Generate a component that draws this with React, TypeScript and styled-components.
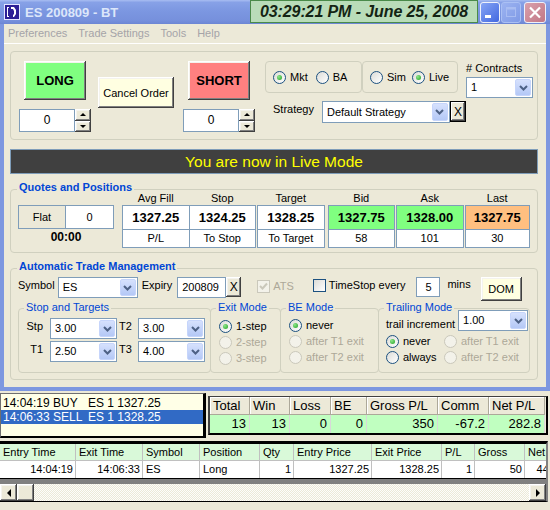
import styled, { createGlobalStyle } from 'styled-components';

const GlobalStyle = createGlobalStyle`
  * { box-sizing: border-box; }
  html, body { margin: 0; padding: 0; }
  body {
    width: 550px;
    height: 510px;
    overflow: hidden;
    background: #ece9d8;
    color: #000;
    font-family: 'Liberation Sans', Arial, Helvetica, sans-serif;
    font-size: 11px;
    line-height: 13px;
  }
  button { font-family: inherit; color: #000; padding: 0; margin: 0; }
`;

const raised = `
  box-shadow: inset -1px -1px #404040, inset 1px 1px #ffffff,
    inset -2px -2px #808080, inset 2px 2px #f4f3ee;
`;

/* ---------- window chrome ---------- */

const Window = styled.div`
  width: 550px;
  display: flex;
  flex-direction: column;
`;

const TitleBar = styled.div`
  height: 24px;
  display: flex;
  align-items: center;
  padding: 0 4px;
  background: linear-gradient(
    to bottom,
    #a8bdf2 0%,
    #87a1e7 10%,
    #7c97e1 45%,
    #7690dc 85%,
    #6c86d4 100%
  );
`;

const Title = styled.span`
  flex: 1;
  margin-left: 5px;
  color: #dce6fa;
  font-size: 13px;
  font-weight: bold;
`;

const Clock = styled.div`
  align-self: flex-start;
  width: 228px;
  height: 23px;
  display: flex;
  align-items: center;
  justify-content: center;
  background: #b9dcb9;
  border: 1px solid #4a8a4a;
  color: #142414;
  font-size: 16px;
  font-weight: bold;
  font-style: italic;
  letter-spacing: -0.1px;
`;

const CaptionButton = styled.div<{ $kind: 'min' | 'max' | 'close' }>`
  width: ${p => (p.$kind === 'close' ? 22 : 20)}px;
  height: 21px;
  margin-left: ${p => (p.$kind === 'min' ? 2 : p.$kind === 'max' ? 1 : 3)}px;
  display: flex;
  align-items: center;
  justify-content: center;
  border-radius: 3px;
  border: 1px solid ${p => (p.$kind === 'max' ? '#aac0f4' : '#eef1fb')};
  background: ${p =>
    p.$kind === 'close'
      ? 'linear-gradient(135deg, #d9a0ac, #c27786)'
      : p.$kind === 'min'
        ? 'linear-gradient(135deg, #86a4f5, #4268e0)'
        : 'linear-gradient(135deg, #9cb3f1, #7f9ae6)'};
`;

const Frame = styled.div`
  border: 4px solid #7d97e0;
  border-top: none;
`;

const MenuBar = styled.div`
  height: 20px;
  display: flex;
  align-items: center;
  gap: 11px;
  padding-left: 4px;
  border-bottom: 1px solid #ffffff;
  color: #a5a4a8;
`;

const Body = styled.div`
  height: 343px;
  padding: 7px 8px 0 6px;
`;

/* ---------- shared controls ---------- */

const GroupBox = styled.div`
  position: relative;
  border: 1px solid #d0d0bf;
  border-radius: 4px;
`;

const Legend = styled.span`
  position: absolute;
  top: -9px;
  left: 6px;
  padding: 0 2px;
  background: #ece9d8;
  color: #0046d5;
  font-weight: bold;
  font-size: 11px;
  line-height: 13px;
  white-space: nowrap;
`;

const SubLegend = styled(Legend)`
  top: -8px;
  left: 5px;
  font-weight: normal;
`;

const RaisedButton = styled.button<{ $w: number; $h: number; $bg?: string }>`
  flex: none;
  width: ${p => p.$w}px;
  height: ${p => p.$h}px;
  display: flex;
  align-items: center;
  justify-content: center;
  border: none;
  background: ${p => p.$bg || '#ece9d8'};
  font-size: 11px;
  ${raised}
`;

const TradeButton = styled(RaisedButton)`
  font-size: 13px;
  font-weight: bold;
`;

const CancelButton = styled(RaisedButton)`
  margin: 16px 0 0 7px;
`;

const DomButton = styled(RaisedButton)`
  margin-left: 10px;
`;

const ClearButton = styled(RaisedButton)<{ $focused?: boolean }>`
  font-size: 12px;
  ${p =>
    p.$focused
      ? `box-shadow: inset 0 0 0 1px #000, inset -2px -2px #404040, inset 2px 2px #fff, inset -3px -3px #808080;`
      : ''}
`;

const ComboBox = styled.div<{ $w: number; $h: number }>`
  flex: none;
  width: ${p => p.$w}px;
  height: ${p => p.$h}px;
  display: flex;
  align-items: stretch;
  padding: 1px;
  background: #fff;
  border: 1px solid #7f9db9;
`;

const ComboText = styled.span`
  flex: 1;
  display: flex;
  align-items: center;
  padding-left: 3px;
  white-space: nowrap;
`;

const DropButton = styled.span`
  width: 16px;
  display: flex;
  align-items: center;
  justify-content: center;
  border: 1px solid #c6d5fb;
  border-radius: 2px;
  background: linear-gradient(to bottom, #d6e1fd, #b4c8f6);
`;

const Combo = ({ value, w, h = 21 }: { value: string; w: number; h?: number }) => (
  <ComboBox $w={w} $h={h}>
    <ComboText>{value}</ComboText>
    <DropButton>
      <svg width="9" height="6" viewBox="0 0 9 6">
        <path d="M1 1l3.5 3.5L8 1" fill="none" stroke="#4d6185" strokeWidth="2" />
      </svg>
    </DropButton>
  </ComboBox>
);

const TextField = styled.div<{ $w: number; $h: number; $center?: boolean; $ml?: number }>`
  flex: none;
  width: ${p => p.$w}px;
  height: ${p => p.$h}px;
  margin-left: ${p => p.$ml || 0}px;
  display: flex;
  align-items: center;
  justify-content: ${p => (p.$center ? 'center' : 'flex-start')};
  padding-left: ${p => (p.$center ? 0 : 4)}px;
  background: #fff;
  border: 1px solid #7f9db9;
  font-size: 11px;
`;

const RadioLabel = styled.span<{ $disabled?: boolean; $ml?: number }>`
  height: 16px;
  display: flex;
  align-items: center;
  gap: 4px;
  margin-left: ${p => p.$ml || 0}px;
  color: ${p => (p.$disabled ? '#aca899' : '#000')};
  white-space: nowrap;
`;

const RadioDot = styled.span<{ $checked?: boolean; $disabled?: boolean }>`
  flex: none;
  width: 13px;
  height: 13px;
  display: flex;
  align-items: center;
  justify-content: center;
  border-radius: 50%;
  border: 1px solid ${p => (p.$disabled ? '#cac8bb' : '#1c5180')};
  background: ${p =>
    p.$disabled ? '#f3f2ea' : 'linear-gradient(135deg, #dcdcd7, #ffffff)'};
  &::after {
    content: '';
    display: ${p => (p.$checked ? 'block' : 'none')};
    width: 5px;
    height: 5px;
    border-radius: 50%;
    background: radial-gradient(circle at 35% 35%, #8ee68b, #21a121);
  }
`;

const Radio = ({
  label,
  checked,
  disabled,
  ml,
}: {
  label: string;
  checked?: boolean;
  disabled?: boolean;
  ml?: number;
}) => (
  <RadioLabel $disabled={disabled} $ml={ml}>
    <RadioDot $checked={checked} $disabled={disabled} />
    {label}
  </RadioLabel>
);

const CheckLabel = styled.span<{ $disabled?: boolean; $ml: number; $mt: number }>`
  display: flex;
  align-items: center;
  gap: 3px;
  margin: ${p => p.$mt}px 0 0 ${p => p.$ml}px;
  color: ${p => (p.$disabled ? '#aca899' : '#000')};
  white-space: nowrap;
`;

const CheckBox = styled.span<{ $disabled?: boolean }>`
  flex: none;
  width: 13px;
  height: 13px;
  display: flex;
  align-items: center;
  justify-content: center;
  border: 1px solid ${p => (p.$disabled ? '#cac8bb' : '#1c5180')};
  background: ${p =>
    p.$disabled ? '#f3f2ea' : 'linear-gradient(135deg, #dcdcd7, #ffffff)'};
`;

const FieldLabel = styled.span<{ $ml?: number; $mt?: number }>`
  flex: none;
  margin: ${p => p.$mt || 0}px 0 0 ${p => p.$ml || 0}px;
  white-space: nowrap;
`;

const Arrow = styled.span<{ $dir: 'up' | 'down' | 'left' | 'right' }>`
  width: 0;
  height: 0;
  border: 3px solid transparent;
  ${p =>
    p.$dir === 'up'
      ? 'border-bottom: 3px solid #000; border-top-width: 0;'
      : p.$dir === 'down'
        ? 'border-top: 3px solid #000; border-bottom-width: 0;'
        : p.$dir === 'left'
          ? 'border-width: 4px; border-right: 4px solid #000; border-left-width: 0;'
          : 'border-width: 4px; border-left: 4px solid #000; border-right-width: 0;'}
`;

/* ---------- order section ---------- */

const OrderGroup = styled(GroupBox)`
  height: 89px;
  display: flex;
  align-items: flex-start;
  padding: 9px 8px 0 8px;
`;

const SideColumn = styled.div<{ $ml?: number }>`
  width: 72px;
  display: flex;
  flex-direction: column;
  align-items: center;
  gap: 9px;
  margin-left: ${p => p.$ml || 0}px;
`;

const Spinner = styled.div`
  width: 72px;
  height: 23px;
  display: flex;
`;

const SpinField = styled.div`
  flex: 1;
  display: flex;
  align-items: center;
  justify-content: center;
  background: #fff;
  border: 1px solid #7f9db9;
  font-size: 12px;
`;

const SpinButtons = styled.div`
  width: 16px;
  display: flex;
  flex-direction: column;
`;

const SpinButton = styled.div`
  flex: 1;
  display: flex;
  align-items: center;
  justify-content: center;
  background: #ece9d8;
  ${raised}
`;

const QtySpinner = () => (
  <Spinner>
    <SpinField>0</SpinField>
    <SpinButtons>
      <SpinButton>
        <Arrow $dir="up" />
      </SpinButton>
      <SpinButton>
        <Arrow $dir="down" />
      </SpinButton>
    </SpinButtons>
  </Spinner>
);

const OptionsArea = styled.div`
  width: 268px;
  margin-left: 10px;
  display: flex;
  flex-direction: column;
`;

const OptionsRow = styled.div<{ $ml?: number }>`
  display: flex;
  align-items: flex-start;
  margin-left: ${p => p.$ml || 0}px;
`;

const RadioBox = styled.div<{ $w: number }>`
  width: ${p => p.$w}px;
  height: 32px;
  display: flex;
  align-items: center;
  padding-left: 7px;
  border: 1px solid #d0d0bf;
  border-radius: 4px;
`;

const ContractsColumn = styled.div`
  margin-left: 8px;
  display: flex;
  flex-direction: column;
  gap: 2px;
  padding-top: 1px;
`;

const StrategyRow = styled.div`
  display: flex;
  align-items: flex-start;
  margin-top: 3px;
  padding-left: 8px;
  gap: 8px;
`;

/* ---------- banner & quotes ---------- */

const Banner = styled.div`
  margin-top: 9px;
  height: 25px;
  display: flex;
  align-items: center;
  justify-content: center;
  background: #404040;
  border: 1px solid #7f9db9;
  color: #ffff00;
  font-size: 15.5px;
`;

const QuotesGroup = styled(GroupBox)`
  margin-top: 15px;
  height: 64px;
  display: flex;
  align-items: flex-start;
  padding: 0 7px;
`;

const PositionBlock = styled.div`
  width: 96px;
  margin-top: 15px;
  display: flex;
  flex-direction: column;
  align-items: center;
`;

const PositionRow = styled.div`
  display: flex;
  align-self: stretch;
`;

const PositionCell = styled.div<{ $bg: string }>`
  width: 48px;
  height: 24px;
  display: flex;
  align-items: center;
  justify-content: center;
  background: ${p => p.$bg};
  border: 1px solid #7f9db9;
  & + & {
    margin-left: -1px;
    width: 49px;
  }
`;

const Timer = styled.div`
  margin-top: 2px;
  font-size: 12px;
  font-weight: bold;
`;

const QuoteColumn = styled.div<{ $ml: number; $w: number }>`
  width: ${p => p.$w}px;
  margin-left: ${p => p.$ml}px;
  display: flex;
  flex-direction: column;
`;

const QuoteHead = styled.div`
  height: 15px;
  padding-top: 2px;
  text-align: center;
`;

const QuoteBox = styled.div`
  border: 1px solid #7f9db9;
`;

const QuoteTop = styled.div<{ $bg: string }>`
  height: 23px;
  display: flex;
  align-items: center;
  justify-content: center;
  background: ${p => p.$bg};
  font-size: 13px;
  font-weight: bold;
`;

const QuoteBottom = styled.div`
  height: 18px;
  display: flex;
  align-items: center;
  justify-content: center;
  background: #fff;
  border-top: 1px solid #7f9db9;
`;

const quotes = [
  { head: 'Avg Fill', top: '1327.25', bottom: 'P/L', ml: 8, w: 68, bg: '#fff' },
  { head: 'Stop', top: '1324.25', bottom: 'To Stop', ml: -1, w: 68, bg: '#fff' },
  { head: 'Target', top: '1328.25', bottom: 'To Target', ml: 1, w: 68, bg: '#fff' },
  { head: 'Bid', top: '1327.75', bottom: '58', ml: 3, w: 68, bg: '#80ff80' },
  { head: 'Ask', top: '1328.00', bottom: '101', ml: 1, w: 68, bg: '#80ff80' },
  { head: 'Last', top: '1327.75', bottom: '30', ml: 1, w: 66, bg: '#ffbf80' },
];

/* ---------- automatic trade management ---------- */

const AtmGroup = styled(GroupBox)`
  margin-top: 15px;
  height: 112px;
  padding: 8px 7px 0 7px;
`;

const AtmRow = styled.div`
  height: 24px;
  display: flex;
  align-items: flex-start;
`;

const SubGroups = styled.div`
  margin-top: 7px;
  display: flex;
`;

const SubGroup = styled(GroupBox)<{ $w: number; $pt: number; $pl: number }>`
  width: ${p => p.$w}px;
  height: 65px;
  padding: ${p => p.$pt}px 0 0 ${p => p.$pl}px;
  & + & {
    margin-left: -1px;
  }
`;

const TargetsGrid = styled.div`
  display: grid;
  grid-template-columns: 24px 67px 21px 67px;
  grid-auto-rows: 21px;
  row-gap: 2px;
`;

const TargetLabel = styled.span<{ $right?: boolean }>`
  padding-top: 2px;
  text-align: ${p => (p.$right ? 'right' : 'left')};
  padding-right: ${p => (p.$right ? 7 : 0)}px;
  padding-left: ${p => (p.$right ? 0 : 2)}px;
`;

const RadioStack = styled.div`
  display: flex;
  flex-direction: column;
`;

const TrailRow = styled.div`
  display: flex;
  align-items: flex-start;
  gap: 3px;
`;

const TrailLabel = styled.span`
  margin-top: 8px;
  white-space: nowrap;
`;

const TrailRadios = styled.div`
  margin-top: 2px;
  display: grid;
  grid-template-columns: 58px auto;
`;

/* ---------- log panel ---------- */

const LogPanel = styled.div`
  display: flex;
  flex-direction: column;
`;

const LogTop = styled.div`
  height: 50px;
  padding-top: 2px;
  display: flex;
  align-items: flex-start;
`;

const OrderList = styled.div`
  width: 206px;
  height: 45px;
  padding: 2px 0 0 2px;
  background: #ffffe7;
  border-top: 1px solid #6f6f6f;
  border-left: 1px solid #6f6f6f;
  border-right: 3px solid #000;
  border-bottom: 2px solid #000;
`;

const OrderRow = styled.div<{ $selected?: boolean }>`
  height: 14px;
  display: flex;
  align-items: center;
  margin-left: -2px;
  padding-left: 2px;
  background: ${p => (p.$selected ? '#316ac5' : 'transparent')};
  color: ${p => (p.$selected ? '#fff' : '#000')};
  font-size: 12px;
  white-space: nowrap;
`;

const OrderCol = styled.span<{ $w?: number }>`
  width: ${p => (p.$w ? `${p.$w}px` : 'auto')};
`;

const StatsBox = styled.div`
  width: 340px;
  margin: 3px 0 0 2px;
  border-top: 1px solid #404040;
  border-left: 2px solid #404040;
  border-right: 2px solid #000;
  border-bottom: 2px solid #000;
`;

const StatsRow = styled.div`
  display: flex;
`;

const StatsHead = styled.div<{ $w: number }>`
  width: ${p => p.$w}px;
  height: 18px;
  padding-left: 3px;
  line-height: 18px;
  background: #ece9d8;
  border-right: 1px solid #aca899;
  border-bottom: 1px solid #aca899;
  box-shadow: inset 1px 1px #fff;
  font-size: 13px;
  white-space: nowrap;
`;

const StatsCell = styled.div<{ $w: number }>`
  width: ${p => p.$w}px;
  height: 18px;
  padding-right: 3px;
  line-height: 18px;
  text-align: right;
  background: #c0ffc0;
  border-right: 1px solid #d8d8d8;
  font-size: 13px;
`;

const stats = [
  { head: 'Total', value: '13', w: 40 },
  { head: 'Win', value: '13', w: 40 },
  { head: 'Loss', value: '0', w: 41 },
  { head: 'BE', value: '0', w: 36 },
  { head: 'Gross P/L', value: '350', w: 71 },
  { head: 'Comm', value: '-67.2', w: 51 },
  { head: 'Net P/L', value: '282.8', w: 56 },
];

const TradesGrid = styled.div`
  width: 548px;
  overflow: hidden;
  border-top: 3px solid #000;
  border-right: 2px solid #808080;
  border-bottom: 1px solid #000;
`;

const GridRow = styled.div`
  display: flex;
  height: 17px;
`;

const GridHead = styled.div<{ $w: number }>`
  flex: none;
  width: ${p => p.$w}px;
  padding-left: 3px;
  line-height: 16px;
  background: #d9f9d9;
  border-right: 1px solid #c0c0c0;
  border-bottom: 1px solid #c0c0c0;
  white-space: nowrap;
`;

const GridCell = styled.div<{ $w: number; $left?: boolean }>`
  flex: none;
  width: ${p => p.$w}px;
  padding: 0 2px 0 3px;
  line-height: 17px;
  text-align: ${p => (p.$left ? 'left' : 'right')};
  background: #fff;
  border-right: 1px solid #c0c0c0;
  white-space: nowrap;
`;

const GridEmpty = styled.div`
  height: 6px;
  background: #808080;
  border-top: 1px solid #000;
`;

const ScrollBar = styled.div`
  height: 17px;
  display: flex;
  background: repeating-conic-gradient(#ece9d8 0 25%, #fdfdfb 0 50%) 0 0 / 2px 2px;
`;

const ScrollButton = styled.div<{ $push?: boolean }>`
  width: 17px;
  height: 17px;
  display: flex;
  align-items: center;
  justify-content: center;
  margin-left: ${p => (p.$push ? 'auto' : '0')};
  background: #ece9d8;
  ${raised}
`;

const trades = [
  { head: 'Entry Time', value: '14:04:19', w: 76 },
  { head: 'Exit Time', value: '14:06:33', w: 67 },
  { head: 'Symbol', value: 'ES', w: 57, left: true },
  { head: 'Position', value: 'Long', w: 60, left: true },
  { head: 'Qty', value: '1', w: 34 },
  { head: 'Entry Price', value: '1327.25', w: 78 },
  { head: 'Exit Price', value: '1328.25', w: 70 },
  { head: 'P/L', value: '1', w: 33 },
  { head: 'Gross', value: '50', w: 50 },
  { head: 'Net', value: '44.8', w: 36 },
];

export default function App() {
  return (
    <>
      <GlobalStyle />
      <Window>
        <TitleBar>
          <svg width="16" height="16" viewBox="0 0 16 16">
            <rect x="0.5" y="0.5" width="15" height="15" fill="#2c1f96" stroke="#e4e6ff" />
            <path d="M3 3h2v1H4v8h1v1H3z" fill="#fff" />
            <path d="M7 3h3l2 3v4l-2 3H9v-2l1-1V7L9 5H7z" fill="#fff" />
            <rect x="8" y="6" width="1" height="3" fill="#2c1f96" />
          </svg>
          <Title>ES 200809 - BT</Title>
          <Clock>03:29:21 PM - June 25, 2008</Clock>
          <CaptionButton $kind="min">
            <svg width="18" height="19" viewBox="0 0 18 19">
              <rect x="4" y="12" width="6" height="3" fill="#fff" />
            </svg>
          </CaptionButton>
          <CaptionButton $kind="max">
            <svg width="18" height="19" viewBox="0 0 18 19">
              <rect x="4.5" y="4.5" width="9" height="9" fill="none" stroke="#a9bdf2" />
              <rect x="4.5" y="4.5" width="9" height="2" fill="#a9bdf2" />
            </svg>
          </CaptionButton>
          <CaptionButton $kind="close">
            <svg width="20" height="19" viewBox="0 0 20 19">
              <path d="M5 4.5l10 10M15 4.5l-10 10" stroke="#fff" strokeWidth="2.2" />
            </svg>
          </CaptionButton>
        </TitleBar>
        <Frame>
          <MenuBar>
            <span>Preferences</span>
            <span>Trade Settings</span>
            <span>Tools</span>
            <span>Help</span>
          </MenuBar>
          <Body>
            <OrderGroup>
              <SideColumn>
                <TradeButton $w={62} $h={39} $bg="#80ff80">
                  LONG
                </TradeButton>
                <QtySpinner />
              </SideColumn>
              <CancelButton $w={76} $h={31} $bg="#ffffe1">
                Cancel Order
              </CancelButton>
              <SideColumn $ml={9}>
                <TradeButton $w={62} $h={39} $bg="#ff8080">
                  SHORT
                </TradeButton>
                <QtySpinner />
              </SideColumn>
              <OptionsArea>
                <OptionsRow>
                  <RadioBox $w={97}>
                    <Radio label="Mkt" checked />
                    <Radio label="BA" ml={8} />
                  </RadioBox>
                  <RadioBox $w={96}>
                    <Radio label="Sim" />
                    <Radio label="Live" checked ml={6} />
                  </RadioBox>
                  <ContractsColumn>
                    # Contracts
                    <Combo value="1" w={67} />
                  </ContractsColumn>
                </OptionsRow>
                <StrategyRow>
                  <FieldLabel $mt={2}>Strategy</FieldLabel>
                  <OptionsRow>
                    <Combo value="Default Strategy" w={128} h={22} />
                    <ClearButton $w={16} $h={21} $focused>
                      X
                    </ClearButton>
                  </OptionsRow>
                </StrategyRow>
              </OptionsArea>
            </OrderGroup>

            <Banner>You are now in Live Mode</Banner>

            <QuotesGroup>
              <Legend>Quotes and Positions</Legend>
              <PositionBlock>
                <PositionRow>
                  <PositionCell $bg="#ece9d8">Flat</PositionCell>
                  <PositionCell $bg="#fff">0</PositionCell>
                </PositionRow>
                <Timer>00:00</Timer>
              </PositionBlock>
              {quotes.map(q => (
                <QuoteColumn key={q.head} $ml={q.ml} $w={q.w}>
                  <QuoteHead>{q.head}</QuoteHead>
                  <QuoteBox>
                    <QuoteTop $bg={q.bg}>{q.top}</QuoteTop>
                    <QuoteBottom>{q.bottom}</QuoteBottom>
                  </QuoteBox>
                </QuoteColumn>
              ))}
            </QuotesGroup>

            <AtmGroup>
              <Legend>Automatic Trade Management</Legend>
              <AtmRow>
                <FieldLabel $mt={2}>Symbol</FieldLabel>
                <OptionsRow $ml={3}>
                  <Combo value="ES" w={80} />
                </OptionsRow>
                <FieldLabel $ml={4} $mt={2}>
                  Expiry
                </FieldLabel>
                <TextField $w={49} $h={21} $ml={5}>
                  200809
                </TextField>
                <ClearButton $w={15} $h={20}>
                  X
                </ClearButton>
                <CheckLabel $disabled $ml={16} $mt={3}>
                  <CheckBox $disabled>
                    <svg width="9" height="9" viewBox="0 0 9 9">
                      <path d="M1 4l2.5 2.5L8 1.5" fill="none" stroke="#cac8bb" strokeWidth="2" />
                    </svg>
                  </CheckBox>
                  ATS
                </CheckLabel>
                <CheckLabel $ml={19} $mt={2}>
                  <CheckBox />
                  TimeStop every
                </CheckLabel>
                <TextField $w={24} $h={20} $ml={11} $center>
                  5
                </TextField>
                <FieldLabel $ml={7} $mt={1}>
                  mins
                </FieldLabel>
                <DomButton $w={41} $h={24} $bg="#ffffe1">
                  DOM
                </DomButton>
              </AtmRow>
              <SubGroups>
                <SubGroup $w={193} $pt={9} $pl={7}>
                  <SubLegend>Stop and Targets</SubLegend>
                  <TargetsGrid>
                    <TargetLabel $right>Stp</TargetLabel>
                    <Combo value="3.00" w={67} />
                    <TargetLabel>T2</TargetLabel>
                    <Combo value="3.00" w={67} />
                    <TargetLabel $right>T1</TargetLabel>
                    <Combo value="2.50" w={67} />
                    <TargetLabel>T3</TargetLabel>
                    <Combo value="4.00" w={67} />
                  </TargetsGrid>
                </SubGroup>
                <SubGroup $w={71} $pt={9} $pl={8}>
                  <SubLegend>Exit Mode</SubLegend>
                  <RadioStack>
                    <Radio label="1-step" checked />
                    <Radio label="2-step" disabled />
                    <Radio label="3-step" disabled />
                  </RadioStack>
                </SubGroup>
                <SubGroup $w={99} $pt={8} $pl={8}>
                  <SubLegend>BE Mode</SubLegend>
                  <RadioStack>
                    <Radio label="never" checked />
                    <Radio label="after T1 exit" disabled />
                    <Radio label="after T2 exit" disabled />
                  </RadioStack>
                </SubGroup>
                <SubGroup $w={152} $pt={1} $pl={7}>
                  <SubLegend>Trailing Mode</SubLegend>
                  <TrailRow>
                    <TrailLabel>trail increment</TrailLabel>
                    <Combo value="1.00" w={70} />
                  </TrailRow>
                  <TrailRadios>
                    <Radio label="never" checked />
                    <Radio label="after T1 exit" disabled />
                    <Radio label="always" />
                    <Radio label="after T2 exit" disabled />
                  </TrailRadios>
                </SubGroup>
              </SubGroups>
            </AtmGroup>
          </Body>
        </Frame>
      </Window>

      <LogPanel>
        <LogTop>
          <OrderList>
            <OrderRow>
              <OrderCol $w={50}>14:04:19</OrderCol>
              <OrderCol $w={35}>BUY</OrderCol>
              <OrderCol>ES 1 1327.25</OrderCol>
            </OrderRow>
            <OrderRow $selected>
              <OrderCol $w={50}>14:06:33</OrderCol>
              <OrderCol $w={35}>SELL</OrderCol>
              <OrderCol>ES 1 1328.25</OrderCol>
            </OrderRow>
          </OrderList>
          <StatsBox>
            <StatsRow>
              {stats.map(s => (
                <StatsHead key={s.head} $w={s.w}>
                  {s.head}
                </StatsHead>
              ))}
            </StatsRow>
            <StatsRow>
              {stats.map(s => (
                <StatsCell key={s.head} $w={s.w}>
                  {s.value}
                </StatsCell>
              ))}
            </StatsRow>
          </StatsBox>
        </LogTop>
        <TradesGrid>
          <GridRow>
            {trades.map(t => (
              <GridHead key={t.head} $w={t.w}>
                {t.head}
              </GridHead>
            ))}
          </GridRow>
          <GridRow>
            {trades.map(t => (
              <GridCell key={t.head} $w={t.w} $left={t.left}>
                {t.value}
              </GridCell>
            ))}
          </GridRow>
          <GridEmpty />
          <ScrollBar>
            <ScrollButton>
              <Arrow $dir="left" />
            </ScrollButton>
            <ScrollButton />
            <ScrollButton $push>
              <Arrow $dir="right" />
            </ScrollButton>
          </ScrollBar>
        </TradesGrid>
      </LogPanel>
    </>
  );
}
